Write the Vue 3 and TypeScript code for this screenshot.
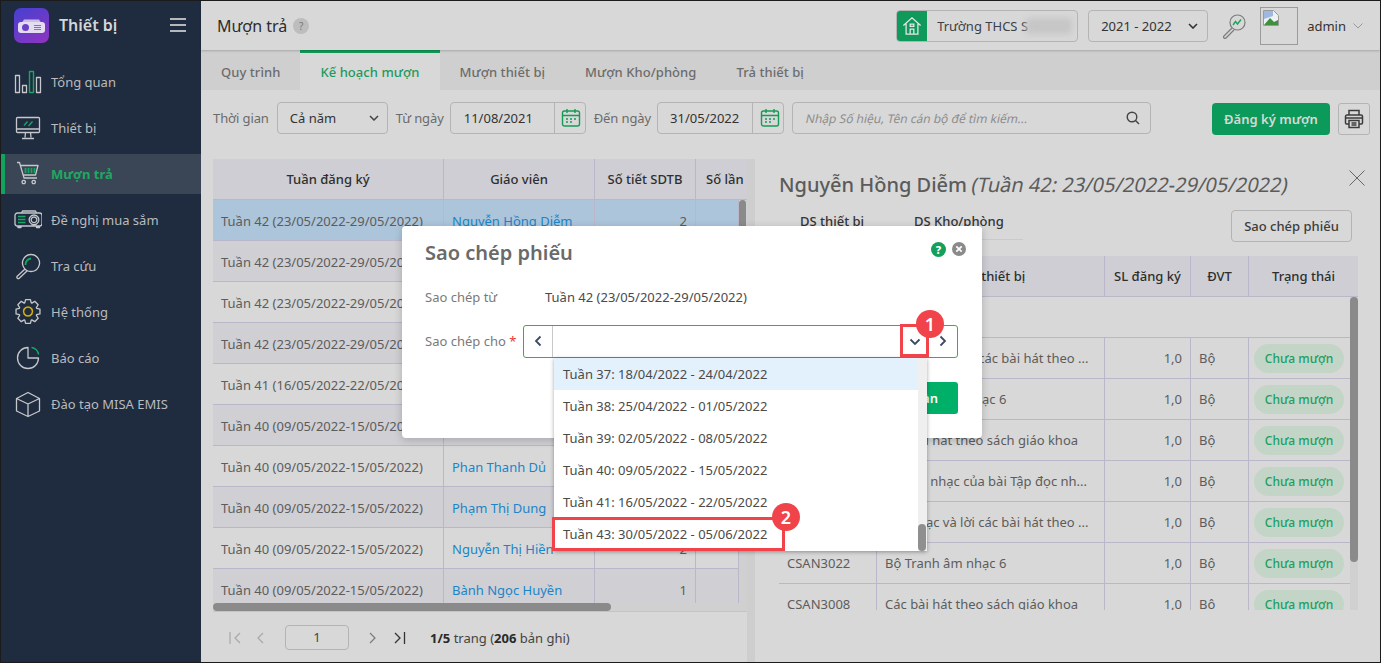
<script setup lang="ts">
function gearPath(): string {
  const cx = 14, cy = 13.5, teeth = 8
  let d = ''
  for (let i = 0; i < teeth; i++) {
    const a = (i * 2 * Math.PI) / teeth - Math.PI / 2
    const pts: [number, number][] = [
      [9.2, a - 0.36], [12.2, a - 0.2], [12.2, a + 0.2], [9.2, a + 0.36],
    ]
    for (const [r, t] of pts) {
      const x = (cx + r * Math.cos(t)).toFixed(2)
      const y = (cy + r * Math.sin(t)).toFixed(2)
      d += `${d ? 'L' : 'M'}${x} ${y}`
    }
  }
  return d + 'z'
}
const nav = [
  { label: 'Tổng quan', gray: 'M1.500 7.500h4v17h-4zM8.500 17.500h4v7h-4zM22.500 9.500h4v15h-4z', accent: 'M15.500 3.500h4v21h-4z', color: '#14a862', w: 1.400 },
  { label: 'Thiết bị', gray: 'M3.500 3.500h21a1 1 0 0 1 1 1v13a1 1 0 0 1-1 1h-21a1 1 0 0 1-1-1v-13a1 1 0 0 1 1-1zM2.500 15h23M11.500 18.500l-.5 5M16.500 18.500l.5 5M8 24.500h12', accent: 'M10 11.500l3.500-4M14.500 12l4-4.500', color: '#14a862', w: 1.400 },
  { label: 'Mượn trả', gray: 'M3 2.500h2.500l4.500 15.500h13M6 5.500h18l-2.500 9.500H9M9.700 20.300a1.700 1.700 0 1 0 .01 0M19.700 20.300a1.700 1.700 0 1 0 .01 0', accent: 'M11.500 8v5M14.500 8v5M17.500 8v5M20.500 8v5', color: '#14a862', w: 1.700 },
  { label: 'Đề nghị mua sắm', gray: 'M3.500 7h22a2.500 2.500 0 0 1 2.500 2.500v8a2.500 2.500 0 0 1-2.500 2.500h-22a2.500 2.500 0 0 1-2.500-2.500v-8A2.500 2.500 0 0 1 3.500 7zM7.500 7l1-2h13l1 2M4 20v1.500h3V20M22.500 20v1.500h3V20M20 9a4.800 4.800 0 1 0 .01 0M20 11a2.800 2.800 0 1 0 .01 0', accent: 'M4 10.500h7.500M4 13.500h7.500M4 16.500h7.500', color: '#14a862', w: 1.500 },
  { label: 'Tra cứu', gray: 'M17 2.500a8.500 8.500 0 1 0 .01 0M11 17l-8 7.500a1.500 1.500 0 0 0 2 2l8-7.500', accent: 'M11.500 13a6 6 0 0 1 5.500-6.500', color: '#14a862', w: 1.800 },
  { label: 'Hệ thống', gray: gearPath(), accent: 'M14 9a4.500 4.500 0 1 0 .01 0', color: '#d8ae0c', w: 1.600 },
  { label: 'Báo cáo', gray: 'M14 3.500A10.500 10.500 0 1 0 24.500 14H14z', accent: 'M17.500 3.500A8 8 0 0 1 24.500 10.500', color: '#14a862', w: 1.600 },
  { label: 'Đào tạo MISA EMIS', gray: 'M14 2.500l11.500 6v12.500L14 26.500 2.500 21V8.500zM2.500 8.500L14 14l11.500-5.500M14 14v12.500', accent: '', color: '#14a862', w: 1.400 },
]
const tabs = ['Quy trình', 'Kế hoạch mượn', 'Mượn thiết bị', 'Mượn Kho/phòng', 'Trả thiết bị']
const w42 = 'Tuần 42 (23/05/2022-29/05/2022)'
const w41 = 'Tuần 41 (16/05/2022-22/05/2022)'
const w40 = 'Tuần 40 (09/05/2022-15/05/2022)'
const leftRows = [
  { week: w42, name: 'Nguyễn Hồng Diễm', n: '2' },
  { week: w42, name: 'Trần Thị Hoa', n: '1' },
  { week: w42, name: 'Lê Thị Mai', n: '1' },
  { week: w42, name: 'Vũ Thị Lan', n: '1' },
  { week: w41, name: 'Đỗ Văn Nam', n: '2' },
  { week: w40, name: 'Hoàng Thị Thu', n: '1' },
  { week: w40, name: 'Phan Thanh Dủ', n: '1' },
  { week: w40, name: 'Phạm Thị Dung', n: '1' },
  { week: w40, name: 'Nguyễn Thị Hiền', n: '2' },
  { week: w40, name: 'Bành Ngọc Huyền', n: '1' },
]
const rightRows = [
  { code: 'CSAN3001', name: 'Tập nhạc và lời các bài hát theo ...' },
  { code: 'CSAN3002', name: 'Bộ Tranh âm nhạc 6' },
  { code: 'CSAN3005', name: 'Các bài hát theo sách giáo khoa' },
  { code: 'CSAN3010', name: 'Nguồn nhạc của bài Tập đọc nh...' },
  { code: 'CSAN3011', name: 'Tập nhạc và lời các bài hát theo ...' },
  { code: 'CSAN3022', name: 'Bộ Tranh âm nhạc 6' },
  { code: 'CSAN3008', name: 'Các bài hát theo sách giáo khoa' },
]
const weeks = [
  'Tuần 37: 18/04/2022 - 24/04/2022',
  'Tuần 38: 25/04/2022 - 01/05/2022',
  'Tuần 39: 02/05/2022 - 08/05/2022',
  'Tuần 40: 09/05/2022 - 15/05/2022',
  'Tuần 41: 16/05/2022 - 22/05/2022',
  'Tuần 43: 30/05/2022 - 05/06/2022',
]
</script>

<template>
  <div class="root">
    <aside class="side">
      <div class="brand">
        <svg class="logo" viewBox="0 0 35 35">
          <defs>
            <linearGradient id="lg" x1="0.2" y1="0" x2="0.8" y2="1">
              <stop offset="0" stop-color="#4a3fd0" />
              <stop offset="1" stop-color="#8a35c0" />
            </linearGradient>
          </defs>
          <rect width="35" height="35" rx="7" fill="url(#lg)" />
          <path d="M8 14.500l2-3h15l2 3z" fill="#c9bfe6" />
          <rect x="4" y="14" width="27" height="11" rx="3" fill="#e3dcf2" />
          <circle cx="11.500" cy="19.500" r="3.500" fill="#6c3fc8" />
          <path d="M20 17.500h7M20 19.500h7M20 21.500h7" stroke="#8a6ad0" stroke-width="1.200" />
        </svg>
        <span class="brand-name">Thiết bị</span>
        <svg class="burger" viewBox="0 0 16 14"><path d="M0 1h16M0 7h16M0 13h16" stroke="#e8e8e8" stroke-width="1.600" /></svg>
      </div>
      <nav class="nav">
        <div v-for="(it, i) in nav" :key="it.label" class="nav-item" :class="{ on: i === 2 }">
          <svg class="nav-ico" viewBox="0 0 28 28" fill="none" stroke-linejoin="round">
            <path :d="it.gray" stroke="#c6c8cb" stroke-width="1.300" />
            <path v-if="it.accent" :d="it.accent" :stroke="it.color" :stroke-width="it.w" />
          </svg>
          <span>{{ it.label }}</span>
        </div>
      </nav>
    </aside>

    <main class="main">
      <header class="top">
        <h1 class="page-title">Mượn trả</h1>
        <span class="help">?</span>
        <div class="school">
          <span class="home">
            <svg viewBox="0 0 22 22" width="20" height="20" fill="none" stroke="#e6e6e6" stroke-width="1.400"><path d="M1.500 10.500L11 2l9.500 8.500M4.500 8.500V20h13V8.500M9 20v-5.500h4V20M9 9h4v2.500H9z" /></svg>
          </span>
          <span class="school-name">Trường THCS S<span class="blur"></span></span>
        </div>
        <div class="year">
          <span>2021 - 2022</span>
          <svg viewBox="0 0 10 6" width="10" height="6" fill="none" stroke="#333" stroke-width="1.600"><path d="M1 1l4 4 4-4" /></svg>
        </div>
        <svg class="chart-search" viewBox="0 0 26 26" fill="none">
          <circle cx="16.500" cy="9.500" r="7.500" stroke="#7c7c7c" stroke-width="1.200" />
          <path d="M11 15L3 23a1.400 1.400 0 0 0 2 2l8-8" stroke="#7c7c7c" stroke-width="1.200" />
          <path d="M12 12l2.500-3.500 2 2.500 3.500-4.500" stroke="#1fa75c" stroke-width="1.500" />
        </svg>
        <div class="avatar">
          <svg viewBox="0 0 16 16" width="16" height="16"><path d="M.5.500h10l5 5v10H.5z" fill="#eef0f4" stroke="#9a9a9a" /><path d="M1 15l6-7 4 4 4-2v5z" fill="#3f8f3f" /><path d="M1 1h9v5L1 9z" fill="#9fb8e0" /></svg>
        </div>
        <span class="admin">admin</span>
        <svg class="admin-chev" viewBox="0 0 10 6" width="10" height="6" fill="none" stroke="#9a9a9a" stroke-width="1"><path d="M.5.500l4.500 4.500 4.500-4.500" /></svg>
      </header>

      <div class="tabs">
        <div v-for="(t, i) in tabs" :key="t" class="tab" :class="{ on: i === 1 }">{{ t }}</div>
      </div>

      <div class="toolbar">
        <label class="lbl">Thời gian</label>
        <div class="field sel">
          <span>Cả năm</span>
          <svg viewBox="0 0 10 6" width="10" height="6" fill="none" stroke="#444" stroke-width="1.500"><path d="M1 1l4 4 4-4" /></svg>
        </div>
        <label class="lbl">Từ ngày</label>
        <div class="field date d1">
          <span class="dval">11/08/2021</span>
          <span class="cal"><svg viewBox="0 0 20 20" width="20" height="20" fill="none" stroke="#169a56" stroke-width="1.400"><rect x="1.500" y="3" width="17" height="15" rx="2" /><path d="M1.500 7.500h17M6 1v4M14 1v4M5 11h2M9 11h2M13 11h2M5 14h2M9 14h2" /></svg></span>
        </div>
        <label class="lbl">Đến ngày</label>
        <div class="field date d2">
          <span class="dval">31/05/2022</span>
          <span class="cal"><svg viewBox="0 0 20 20" width="20" height="20" fill="none" stroke="#169a56" stroke-width="1.400"><rect x="1.500" y="3" width="17" height="15" rx="2" /><path d="M1.500 7.500h17M6 1v4M14 1v4M5 11h2M9 11h2M13 11h2M5 14h2M9 14h2" /></svg></span>
        </div>
        <div class="field search">
          <span class="ph">Nhập Số hiệu, Tên cán bộ để tìm kiếm...</span>
          <svg viewBox="0 0 14 14" width="14" height="14" fill="none" stroke="#444" stroke-width="1.400"><circle cx="6" cy="6" r="4.800" /><path d="M9.500 9.500L13 13" /></svg>
        </div>
        <button class="primary">Đăng ký mượn</button>
        <button class="print">
          <svg viewBox="0 0 20 20" width="20" height="20" fill="none" stroke="#3c3c3c" stroke-width="1.500"><path d="M5 6V1.500h10V6M5 15H2.500a1 1 0 0 1-1-1V7.500a1.500 1.500 0 0 1 1.500-1.500h14a1.500 1.500 0 0 1 1.500 1.500V14a1 1 0 0 1-1 1H15M5 11.500h10v7H5zM7.500 14h5M7.500 16h5M1.500 9h17" /></svg>
        </button>
      </div>

      <div class="content">
        <section class="left">
          <div class="lt">
            <div class="lgrid lhead">
              <div>Tuần đăng ký</div><div>Giáo viên</div><div>Số tiết SDTB</div><div class="clipped">Số lần</div>
            </div>
            <div class="lbody">
              <div v-for="(r, i) in leftRows" :key="i" class="lgrid lrow" :class="{ picked: i === 0, alt: i % 2 === 1 }">
                <div class="wk">{{ r.week }}</div>
                <div class="tname">{{ r.name }}</div>
                <div class="num">{{ r.n }}</div>
                <div></div>
              </div>
              <div class="vbar"><i></i></div>
            </div>
            <div class="hbar"><i></i></div>
          </div>
          <div class="pager">
            <svg viewBox="0 0 13 12" width="13" height="12" fill="none" stroke="#a8a8a8" stroke-width="1.200"><path d="M1 0v12M11 1L6 6l5 5" /></svg>
            <svg class="pg2" viewBox="0 0 8 12" width="8" height="12" fill="none" stroke="#a8a8a8" stroke-width="1.200"><path d="M7 1L2 6l5 5" /></svg>
            <div class="pg-input">1</div>
            <svg class="pg3" viewBox="0 0 8 12" width="8" height="12" fill="none" stroke="#7a7a7a" stroke-width="1.200"><path d="M1 1l5 5-5 5" /></svg>
            <svg class="pg4" viewBox="0 0 13 12" width="13" height="12" fill="none" stroke="#333" stroke-width="1.300"><path d="M2 1l5 5-5 5M11.500 0v12" /></svg>
            <span class="pg-text"><b>1/5</b> trang (<b>206</b> bản ghi)</span>
          </div>
        </section>

        <section class="right">
          <div class="r-title"><b>Nguyễn Hồng Diễm</b> <em>(Tuần 42: 23/05/2022-29/05/2022)</em></div>
          <svg class="r-close" viewBox="0 0 16 16" width="16" height="16" fill="none" stroke="#666" stroke-width="1"><path d="M.5.500l15 15M15.500.500l-15 15" /></svg>
          <div class="r-bar">
            <div class="r-tabs">
              <span class="rt first">DS thiết bị</span>
              <span class="rt">DS Kho/phòng</span>
            </div>
            <button class="copy">Sao chép phiếu</button>
          </div>
          <div class="rt-wrap">
            <div class="rgrid rhead">
              <div>Mã</div><div>Tên thiết bị</div><div>SL đăng ký</div><div>ĐVT</div><div>Trạng thái</div>
            </div>
            <div class="rbody">
              <div class="rgroup"></div>
              <div v-for="(r, i) in rightRows" :key="i" class="rgrid rrow">
                <div>{{ r.code }}</div>
                <div>{{ r.name }}</div>
                <div class="num">1,0</div>
                <div>Bộ</div>
                <div class="pill-cell"><span class="pill">Chưa mượn</span></div>
              </div>
              <div class="rvbar"><i></i></div>
            </div>
          </div>
        </section>
      </div>
    </main>

    <div class="modal">
      <div class="m-title">Sao chép phiếu</div>
      <span class="m-help">?</span>
      <span class="m-close">
        <svg viewBox="0 0 14 14" width="14" height="14"><circle cx="7" cy="7" r="7" fill="#8a8a8a" /><path d="M4.300 4.300l5.400 5.400M9.700 4.300l-5.400 5.400" stroke="#fff" stroke-width="1.700" /></svg>
      </span>
      <div class="m-row from">
        <span class="m-lbl">Sao chép từ</span>
        <span class="m-val">Tuần 42 (23/05/2022-29/05/2022)</span>
      </div>
      <div class="m-row to">
        <span class="m-lbl">Sao chép cho <i class="req">*</i></span>
        <div class="combo">
          <span class="c-side">
            <svg viewBox="0 0 8 12" width="8" height="12" fill="none" stroke="#3d4a66" stroke-width="1.800"><path d="M6.500 1.500L2 6l4.500 4.500" /></svg>
          </span>
          <span class="c-mid"></span>
          <span class="c-drop">
            <svg viewBox="0 0 12 8" width="12" height="8" fill="none" stroke="#3d4a66" stroke-width="1.800"><path d="M1.500 1.500L6 6l4.500-4.500" /></svg>
          </span>
          <span class="c-side next">
            <svg viewBox="0 0 8 12" width="8" height="12" fill="none" stroke="#3d4a66" stroke-width="1.800"><path d="M1.500 1.500L6 6l-4.500 4.500" /></svg>
          </span>
        </div>
      </div>
      <button class="m-ok">Hoàn</button>

      <div class="drop">
        <div v-for="(w, i) in weeks" :key="w" class="opt" :class="{ hi: i === 0 }">{{ w }}</div>
        <div class="d-bar"><i></i></div>
      </div>
      <div class="mark m1"></div>
      <div class="mark m2"></div>
      <span class="badge b1">1</span>
      <span class="badge b2">2</span>
    </div>
  </div>
</template>

<style>
html, body { margin: 0; padding: 0; overflow: hidden; }
</style>

<style scoped>
* { box-sizing: border-box; }
.root {
  width: 1381px; height: 663px; display: flex; position: relative; overflow: hidden;
  font-family: "Noto Sans", "Open Sans", sans-serif; font-size: 13px; color: #3a3a3a;
  background: #d8d8d8; border: 1px solid #1b1b1b;
}
/* sidebar */
.side { width: 200px; flex: none; background: #1f2b3e; color: #b9bbbe; }
.brand { display: flex; align-items: center; height: 50px; padding: 0 0 0 13px; margin-top: -1px; }
.logo { width: 35px; height: 35px; flex: none; }
.brand-name { margin-left: 10px; font-size: 16px; font-weight: 600; color: #d4d6d9; }
.burger { width: 16px; height: 14px; margin-left: auto; margin-right: 15px; }
.nav { display: flex; flex-direction: column; gap: 6px; margin-top: 12px; }
.nav-item { height: 40px; display: flex; align-items: center; padding-left: 13px; font-size: 13px; }
.nav-ico { width: 28px; height: 28px; flex: none; margin-right: 9px; }
.nav-item.on { background: #3a4556; box-shadow: inset 4px 0 0 #13a35d; color: #1fa862; font-weight: 700; }
/* main */
.main { flex: 1; min-width: 0; display: flex; flex-direction: column; }
.top { height: 49px; flex: none; display: flex; align-items: center; padding-left: 16px; background: #d8d8d8; box-shadow: 0 1px 2px rgba(0,0,0,.2); position: relative; z-index: 1; }
.page-title { margin: 0; font-size: 16px; font-weight: 400; color: #2c2c2c; }
.help { width: 16px; height: 16px; border-radius: 50%; background: #bdbdbd; color: #777; font-size: 10px; line-height: 16px; text-align: center; margin-left: 6px; }
.school { margin-left: auto; width: 182px; height: 32px; border: 1px solid #b4b4b4; border-radius: 4px; display: flex; align-items: center; overflow: hidden; }
.home { width: 31px; height: 32px; background: #0f9a5c; display: flex; align-items: center; justify-content: center; flex: none; margin-left: -1px; }
.school-name { margin-left: 10px; white-space: nowrap; color: #3c4048; display: flex; align-items: center; }
.blur { display: block; width: 46px; height: 16px; background: #c6c6c6; filter: blur(3px); margin-left: -2px; }
.year { width: 120px; height: 32px; margin-left: 10px; border: 1px solid #b4b4b4; border-radius: 4px; display: flex; align-items: center; justify-content: space-between; padding: 0 9px 0 12px; color: #333; }
.chart-search { width: 26px; height: 26px; margin-left: 13px; }
.avatar { width: 38px; height: 38px; margin-left: 13px; border: 1px solid #9b9b9b; padding: 2px; line-height: 0; }
.admin { margin-left: 9px; color: #333; }
.admin-chev { margin-left: 7px; margin-right: 17px; }
.tabs { height: 40px; flex: none; display: flex; background: #cfcfcf; }
.tab { padding: 3px 20px 0; display: flex; align-items: center; color: #6c6c6c; font-weight: 500; letter-spacing: .06px; }
.tab.on { background: #d8d8d8; border-top: 3px solid #119a58; padding-top: 0; color: #1e9a5d; }
.toolbar { height: 32px; flex: none; margin-top: 12px; padding: 0 10px 0 12px; display: flex; align-items: center; }
.lbl { color: #6b6b6b; white-space: nowrap; letter-spacing: -.1px; }
.field { height: 32px; border: 1px solid #b4b4b4; border-radius: 4px; display: flex; align-items: center; }
.sel { width: 111px; margin: 0 8px; padding: 0 8px 0 12px; justify-content: space-between; color: #333; }
.date { margin: 0 8px 0 6px; }
.d1 { width: 136px; }
.d2 { width: 127px; }
.dval { flex: 1; padding-left: 13px; color: #333; }
.d2 .dval { padding-left: 12px; }
.cal { width: 31px; height: 30px; border-left: 1px solid #b4b4b4; padding-left: 3px; display: flex; align-items: center; justify-content: center; }
.search { width: 359px; padding: 0 10px 0 13px; justify-content: space-between; flex: none; }
.ph { display: inline-block; transform: skewX(-12deg); font-size: 12px; color: #8d8d8d; }
.primary { margin-left: 61px; margin-top: 2px; width: 118px; height: 32px; border: 0; border-radius: 4px; background: #0c9a5b; color: #d8d8d8; font: 600 13px "Noto Sans", sans-serif; }
.print { margin-left: 8px; margin-top: 2px; width: 32px; height: 32px; border: 1px solid #b4b4b4; border-radius: 3px; background: none; padding: 0; display: flex; align-items: center; justify-content: center; }
.content { flex: 1; min-height: 0; display: flex; margin-top: 25px; }
/* left */
.left { width: 554px; flex: none; display: flex; flex-direction: column; padding-left: 12px; background: linear-gradient(to left, #cecece 8px, transparent 8px); }
.lt { width: 534px; }
.lgrid { display: grid; grid-template-columns: 231px 151px 101px 1fr; }
.lgrid > div { border-right: 1px solid #b9b7c9; border-bottom: 1px solid #b9b7c9; display: flex; align-items: center; }
.lhead { height: 41px; background: #cfced4; color: #2e2e2e; font-weight: 500; }
.lhead > div { justify-content: center; }
.lhead > .clipped { border-right: 0; justify-content: flex-start; padding-left: 10px; }
.lbody { height: 403px; overflow: hidden; position: relative; padding-right: 8px; }
.lrow { height: 41px; color: #5c5c5c; }
.lrow > div { padding-top: 1px; }
.lrow.alt { background: #d0cfd4; }
.lrow.picked { background: #adc5da; }
.wk { padding-left: 8px; white-space: nowrap; }
.tname { padding-left: 8px; color: #1a85c8; white-space: nowrap; }
.num { justify-content: flex-end; padding-right: 8px; color: #5c5c5c; }
.vbar { position: absolute; right: 0; top: 0; bottom: 0; width: 8px; background: #d0d0d0; }
.vbar i { display: block; width: 7px; height: 60px; background: #8a8a8a; border-radius: 4px; }
.hbar { height: 8px; background: #d0d0d0; }
.hbar i { display: block; width: 398px; height: 8px; background: #8a8a8a; border-radius: 4px; }
.pager { flex: 1; display: flex; align-items: center; padding-left: 16px; border-top: 1px solid #c4c4c4; width: 534px; padding-top: 1px; }
.pg2 { margin-left: 14px; }
.pg-input { width: 64px; height: 25px; margin-left: 21px; border: 1px solid #b4b4b4; border-radius: 4px; text-align: center; line-height: 23px; color: #444; }
.pg3 { margin-left: 20px; }
.pg4 { margin-left: 16px; }
.pg-text { margin-left: 24px; color: #444; }
.pg-text b { color: #2a2a2a; }
/* right */
.right { flex: 1; min-width: 0; position: relative; padding-left: 24px; }
.r-title { font-size: 20px; color: #5b5b5b; margin-top: 10px; line-height: 32px; white-space: nowrap; }
.r-title b { font-weight: 500; }
.r-title em { display: inline-block; font-style: normal; transform: skewX(-12deg); }
.r-close { position: absolute; right: 15px; top: 11px; }
.r-bar { width: 573px; height: 40px; display: flex; justify-content: space-between; align-items: flex-start; margin-top: 9px; }
.r-tabs { display: flex; width: 244px; height: 29px; border-bottom: 1px solid #cacaca; margin-top: 1px; padding-top: 1px; }
.rt { margin-left: 21px; color: #333; font-weight: 500; height: 27px; }
.rt.first { width: 93px; flex: none; }
.copy { width: 121px; height: 32px; border: 1px solid #b4b4b4; border-radius: 4px; background: none; color: #3c3c3c; font: 500 13px "Noto Sans", sans-serif; }
.rt-wrap { width: 579px; margin-top: 6px; }
.rgrid { display: grid; grid-template-columns: 98px 228px 86px 58px 1fr; }
.rhead { height: 41px; background: #cfced4; color: #2e2e2e; font-weight: 500; }
.rhead > div { display: flex; align-items: center; justify-content: center; border-right: 1px solid #b9b7c9; border-bottom: 1px solid #b9b7c9; }
.rhead > div:last-child { border-right: 0; }
.rbody { position: relative; height: 313px; overflow: hidden; padding-right: 8px; }
.rgroup { height: 41px; border-bottom: 1px solid #b9b7c9; }
.rrow { height: 41px; color: #5c5c5c; }
.rrow > div { display: flex; align-items: center; padding-left: 8px; border-right: 1px solid #b9b7c9; border-bottom: 1px solid #b9b7c9; white-space: nowrap; overflow: hidden; }
.rrow > div:last-child { border-right: 0; }
.rrow > .num { padding-left: 0; padding-right: 8px; }
.rrow > .pill-cell { padding-left: 5px; }
.pill { width: 90px; height: 29px; border-radius: 15px; background: #c3d5c7; color: #1b9f5f; font-size: 12px; font-weight: 500; display: flex; align-items: center; justify-content: center; }
.rvbar { position: absolute; right: 0; top: 0; bottom: 0; width: 8px; background: #d0d0d0; }
.rvbar i { display: block; width: 8px; height: 265px; background: #8a8a8a; border-radius: 4px; }
/* modal */
.modal { position: absolute; left: 401px; top: 225px; width: 580px; height: 212px; background: #fff; border-radius: 4px; box-shadow: 0 2px 8px rgba(0,0,0,.2); z-index: 5; }
.m-title { position: absolute; left: 23px; top: 13px; font-size: 20px; font-weight: 600; color: #6a6a6a; }
.m-help { position: absolute; left: 529px; top: 16px; width: 15px; height: 15px; border-radius: 50%; background: #14a05c; color: #fff; font-size: 11px; font-weight: 800; line-height: 15px; text-align: center; }
.m-close { position: absolute; left: 550px; top: 16px; line-height: 0; }
.m-row { position: absolute; left: 23px; right: 23px; display: flex; align-items: center; }
.from { top: 60px; height: 22px; }
.to { top: 99px; height: 32px; }
.m-lbl { color: #7a7a7a; width: 98px; flex: none; white-space: nowrap; }
.from .m-lbl { width: 120px; }
.m-val { color: #4a4a4a; }
.req { color: #e53935; font-style: normal; }
.combo { width: 435px; height: 33px; border: 1px solid #3aad4a; border-radius: 3px; display: flex; align-items: center; }
.c-side { width: 29px; height: 31px; flex: none; display: flex; align-items: center; justify-content: center; border-right: 1px solid #c8c8c8; }
.c-side.next { border: 0; width: 29px; }
.c-mid { flex: 1; }
.c-drop { width: 28px; height: 31px; flex: none; display: flex; align-items: center; justify-content: center; padding: 2px 0 0 1px; }
.m-ok { position: absolute; right: 24px; top: 156px; width: 90px; height: 32px; border: 0; border-radius: 3px; background: #00b068; color: #fff; font: 600 13px "Noto Sans", sans-serif; text-align: right; padding-right: 20px; }
.drop { position: absolute; left: 152px; top: 132px; width: 373px; height: 193px; background: #fff; box-shadow: 0 1px 4px rgba(0,0,0,.35); z-index: 2; padding-right: 9px; }
.opt { height: 32px; line-height: 32px; padding-left: 9px; color: #4a4a4a; }
.opt.hi { background: #e3f1fd; }
.d-bar { position: absolute; right: 0; top: 0; bottom: 0; width: 9px; background: #efefef; }
.d-bar i { position: absolute; bottom: 0; left: 0; width: 8px; height: 27px; background: #8f8f8f; border-radius: 4px; }
.mark { position: absolute; border: 3px solid #f0434a; z-index: 3; }
.m1 { left: 498px; top: 98px; width: 29px; height: 33px; }
.m2 { left: 150px; top: 291px; width: 233px; height: 34px; }
.badge { position: absolute; width: 28px; height: 28px; border-radius: 50%; background: #f0434a; color: #fff; font: 600 18px/28px "Noto Sans", sans-serif; text-align: center; z-index: 4; }
.b1 { left: 514px; top: 84px; }
.b2 { left: 370px; top: 277px; }
</style>
